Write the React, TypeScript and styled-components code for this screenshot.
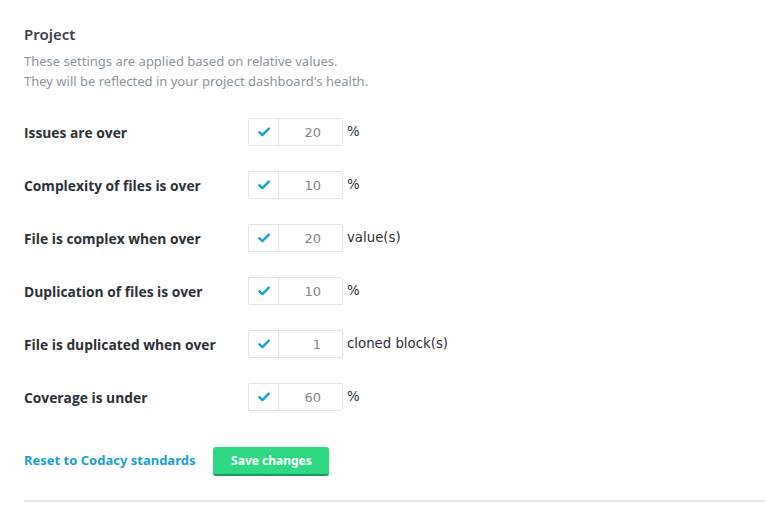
import React from "react";
import styled, { createGlobalStyle } from "styled-components";

const Global = createGlobalStyle`
  html, body { margin: 0; padding: 0; background: #ffffff; }
  body { font-family: "Noto Sans", "Open Sans", sans-serif; }
`;

const Page = styled.div`
  padding: 24px 0 0 24px;
  width: 741px;
`;

const Title = styled.h2`
  margin: 0;
  font-size: 15px;
  line-height: 20px;
  font-weight: 600;
  color: #3a424a;
`;

const Description = styled.p`
  margin: 7px 0 0;
  font-size: 13px;
  line-height: 20px;
  color: #8a949c;
`;

const Rows = styled.div`
  display: flex;
  flex-direction: column;
  gap: 25px;
  margin-top: 27px;
`;

const Row = styled.div`
  display: flex;
  align-items: center;
  height: 28px;
`;

const Label = styled.div`
  width: 224px;
  font-family: "Open Sans", "Noto Sans", sans-serif;
  font-size: 13.8px;
  font-weight: 700;
  color: #2b3036;
`;

const InputGroup = styled.div`
  display: flex;
  height: 28px;
  box-sizing: border-box;
  border: 1px solid #dfe6ea;
  border-radius: 2px;
`;

const CheckCell = styled.div`
  width: 29px;
  display: flex;
  align-items: center;
  justify-content: center;
  border-right: 1px solid #dfe6ea;
`;

const Value = styled.div`
  width: 63px;
  box-sizing: border-box;
  padding-right: 21px;
  padding-top: 1px;
  text-align: right;
  font-family: "DejaVu Sans", sans-serif;
  font-size: 13px;
  line-height: 26px;
  color: #7e878f;
`;

const Unit = styled.span`
  margin-left: 4px;
  margin-top: -2px;
  font-family: "DejaVu Sans", sans-serif;
  font-size: 13.3px;
  color: #2b3036;
`;

const Footer = styled.div`
  display: flex;
  align-items: center;
  gap: 18px;
  margin-top: 36px;
`;

const ResetLink = styled.a`
  margin-bottom: 3px;
  font-size: 13px;
  font-weight: 700;
  color: #1a9fd0;
  text-decoration: none;
  cursor: pointer;
`;

const SaveButton = styled.button`
  width: 116px;
  height: 29px;
  box-sizing: border-box;
  border: none;
  border-bottom: 2px solid #1e9a5a;
  border-radius: 3px;
  background: #2fd983;
  color: #ffffff;
  font-family: inherit;
  font-size: 12px;
  font-weight: 700;
  padding: 0;
`;

const Divider = styled.hr`
  margin: 24px 0 0;
  border: none;
  border-top: 2px solid #e1e7ea;
`;

const Check = () => (
  <svg width="12" height="10" viewBox="0 0 12 10" aria-hidden="true">
    <path d="M1.3 5.2 L4.4 8.1 L10.8 1.6" fill="none" stroke="#14a3d2" strokeWidth="2.4" strokeLinecap="round" strokeLinejoin="round" />
  </svg>
);

const settings = [
  { label: "Issues are over", value: "20", unit: "%" },
  { label: "Complexity of files is over", value: "10", unit: "%" },
  { label: "File is complex when over", value: "20", unit: "value(s)" },
  { label: "Duplication of files is over", value: "10", unit: "%" },
  { label: "File is duplicated when over", value: "1", unit: "cloned block(s)" },
  { label: "Coverage is under", value: "60", unit: "%" },
];

export default function App() {
  return (
    <>
      <Global />
      <Page>
        <Title>Project</Title>
        <Description>
          These settings are applied based on relative values.
          <br />
          They will be reflected in your project dashboard's health.
        </Description>
        <Rows>
          {settings.map((s) => (
            <Row key={s.label}>
              <Label>{s.label}</Label>
              <InputGroup>
                <CheckCell>
                  <Check />
                </CheckCell>
                <Value>{s.value}</Value>
              </InputGroup>
              <Unit>{s.unit}</Unit>
            </Row>
          ))}
        </Rows>
        <Footer>
          <ResetLink>Reset to Codacy standards</ResetLink>
          <SaveButton>Save changes</SaveButton>
        </Footer>
        <Divider />
      </Page>
    </>
  );
}
